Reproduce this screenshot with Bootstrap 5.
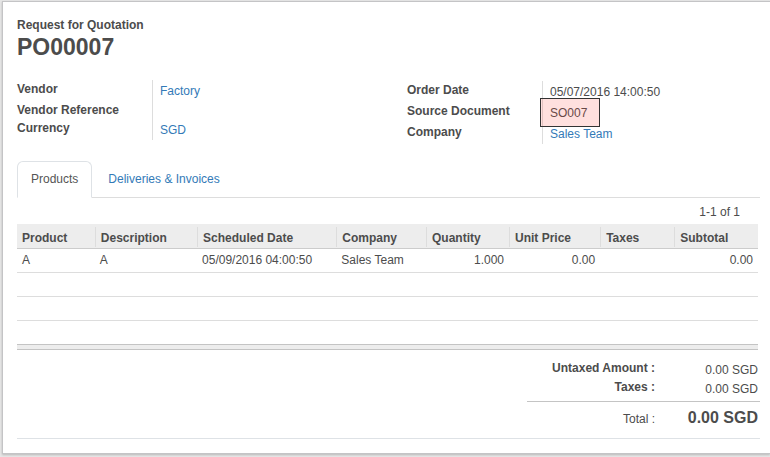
<!DOCTYPE html>
<html lang="en">
<head>
<meta charset="utf-8">
<meta name="viewport" content="width=device-width, initial-scale=1">
<title>Request for Quotation PO00007</title>
<link href="https://cdn.jsdelivr.net/npm/bootstrap@5.3.0/dist/css/bootstrap.min.css" rel="stylesheet">
<style>
  body { background: #e6e6e6; color: #4c4c4c; font-family: "Liberation Sans", Arial, sans-serif; font-size: 12px; line-height: 18px; }
  a { color: #337ab7; }
  .sheet { margin: 1px 0 3px 2px; padding: 14px 10px 14px 14px; border: 1px solid #c4c4c6; border-right: 0; box-shadow: 0 1px 2px rgba(0,0,0,.2); }
  .doc-name { font-size: 23px; line-height: 26px; }
  .groups { display: grid; grid-template-columns: 390fr 353fr; margin-top: 20px; align-items: start; }
  .field-row { display: grid; grid-template-columns: 135px 1fr; }
  .field-value { border-left: 1px solid #ddd; padding: 2px 0 1px 7px; min-height: 18px; }
  .field-value.blank { padding: 0; }
  .order-group { padding-top: 1px; }
  .marked { position: relative; }
  .marked::after { content: ""; position: absolute; left: -3px; top: -4px; width: 60px; height: 29px; border: 1px solid #333; background: rgba(255,60,50,.16); }
  .doc-tabs { margin-top: 17px; --bs-nav-tabs-border-color: #ddd; --bs-nav-link-color: #337ab7; --bs-nav-tabs-link-active-color: #555; }
  .doc-tabs .nav-link { padding: 8px 13px 9px; margin-right: 2px; }
  .lines-wrap { margin-right: 2px; }
  .pager { padding: 5px 18px 3px 0; }
  .lines { table-layout: fixed; width: 100%; border-collapse: collapse; }
  .lines th { background: #ededed; height: 24px; padding: 5px 0 0 5px; position: relative; border-bottom: 1px solid #ccc; }
  .lines th + th::before { content: ""; position: absolute; left: 0; top: 3px; bottom: 1px; border-left: 1px solid #ddd; }
  .lines th + th { padding-left: 6px; }
  .lines td { height: 24px; padding: 0 5px; border-bottom: 1px solid #ddd; }
  .lines tbody tr:last-child td { border-bottom-color: #c4c4c4; }
  .lines tfoot td { height: 5px; background: #ededed; border-bottom: 1px solid #c4c4c4; }
  .totals { width: 233px; margin-top: 9px; }
  .total-row { display: grid; grid-template-columns: 128px 1fr; padding-right: 2px; height: 19px; }
  .total-row > :last-child { padding-top: 2px; }
  .grand { border-top: 1px solid #c4c4c4; margin-top: 4px; padding-top: 7px; height: 37px; line-height: 20px; }
  .grand > :last-child { font-size: 16px; padding: 0; line-height: 18px; }
</style>
<script src="https://cdn.jsdelivr.net/npm/bootstrap@5.3.0/dist/js/bootstrap.bundle.min.js"></script>
</head>
<body>
<main class="sheet bg-white">
  <header>
    <div class="fw-bold">Request for Quotation</div>
    <h1 class="doc-name fw-bold mb-0">PO00007</h1>
  </header>

  <div class="groups">
    <dl class="mb-0">
      <div class="field-row"><dt>Vendor</dt><dd class="field-value mb-0"><a class="text-decoration-none" href="#">Factory</a></dd></div>
      <div class="field-row"><dt>Vendor Reference</dt><dd class="field-value blank mb-0"></dd></div>
      <div class="field-row"><dt>Currency</dt><dd class="field-value mb-0"><a class="text-decoration-none" href="#">SGD</a></dd></div>
    </dl>
    <dl class="order-group mb-0">
      <div class="field-row"><dt>Order Date</dt><dd class="field-value mb-0">05/07/2016 14:00:50</dd></div>
      <div class="field-row"><dt>Source Document</dt><dd class="field-value marked mb-0">SO007</dd></div>
      <div class="field-row"><dt>Company</dt><dd class="field-value mb-0"><a class="text-decoration-none" href="#">Sales Team</a></dd></div>
    </dl>
  </div>

  <ul class="nav nav-tabs doc-tabs">
    <li class="nav-item"><a class="nav-link active" aria-current="page" href="#">Products</a></li>
    <li class="nav-item"><a class="nav-link" href="#">Deliveries &amp; Invoices</a></li>
  </ul>

  <section class="lines-wrap">
    <div class="pager text-end">1-1 of 1</div>
    <table class="lines">
      <colgroup><col style="width:10.5%"><col style="width:13.8%"><col style="width:18.8%"><col style="width:12.1%"><col style="width:11.2%"><col style="width:12.3%"><col style="width:10%"><col></colgroup>
      <thead>
        <tr><th>Product</th><th>Description</th><th>Scheduled Date</th><th>Company</th><th>Quantity</th><th>Unit Price</th><th>Taxes</th><th>Subtotal</th></tr>
      </thead>
      <tbody>
        <tr><td>A</td><td>A</td><td>05/09/2016 04:00:50</td><td>Sales Team</td><td class="text-end">1.000</td><td class="text-end">0.00</td><td></td><td class="text-end">0.00</td></tr>
        <tr><td colspan="8"></td></tr>
        <tr><td colspan="8"></td></tr>
        <tr><td colspan="8"></td></tr>
      </tbody>
      <tfoot><tr><td colspan="8"></td></tr></tfoot>
    </table>
  </section>

  <div class="border-bottom">
    <div class="totals ms-auto text-end">
      <div class="total-row"><strong>Untaxed Amount :</strong><span>0.00 SGD</span></div>
      <div class="total-row"><strong>Taxes :</strong><span>0.00 SGD</span></div>
      <div class="total-row grand"><span>Total :</span><strong>0.00 SGD</strong></div>
    </div>
  </div>
</main>
</body>
</html>
